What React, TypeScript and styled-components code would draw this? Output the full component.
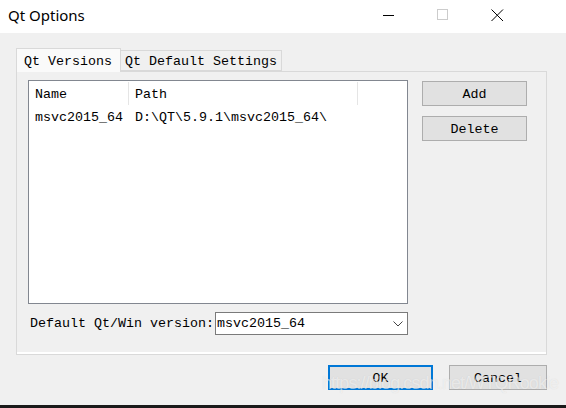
import React from "react";
import styled, { createGlobalStyle } from "styled-components";

const Global = createGlobalStyle`
  html, body { margin: 0; padding: 0; background: #f0f0f0; }
  body { width: 566px; height: 408px; overflow: hidden; }
`;

const Window = styled.div`
  position: relative;
  width: 566px;
  height: 408px;
  display: flex;
  flex-direction: column;
  font-family: "Liberation Mono", "DejaVu Sans Mono", monospace;
  font-size: 13.33px;
  color: #000;
`;

const TitleBar = styled.div`
  height: 33px;
  flex: none;
  background: #fff;
  display: flex;
  align-items: center;
  padding-left: 8px;
  padding-right: 42px;
`;

const Title = styled.div`
  flex: 1;
  font-family: "Noto Sans", "Open Sans", sans-serif;
  font-size: 15px;
  color: #000;
  margin-top: -3px;
`;

const Caption = styled.div`
  width: 54px;
  height: 33px;
  display: flex;
  align-items: center;
  justify-content: center;
  margin-top: -3px;
`;

const Body = styled.div`
  flex: 1;
  background: #f0f0f0;
  display: flex;
  flex-direction: column;
  padding: 15px 19px 0 16px;
`;

const TabBar = styled.div`
  display: flex;
  align-items: flex-end;
  height: 23px;
  position: relative;
  z-index: 1;
`;

const Tab = styled.div<{ $active?: boolean }>`
  box-sizing: border-box;
  height: ${(p) => (p.$active ? 24 : 21)}px;
  margin-bottom: ${(p) => (p.$active ? -1 : 0)}px;
  padding: ${(p) => (p.$active ? "1px 8px 0 7px" : "2px 4px 0 4px")};
  border: 1px solid #d9d9d9;
  border-bottom: ${(p) => (p.$active ? "none" : "1px solid #d9d9d9")};
  border-left: ${(p) => (p.$active ? "1px solid #d9d9d9" : "none")};
  background: ${(p) => (p.$active ? "#fafafa" : "#f0f0f0")};
  display: flex;
  align-items: center;
  white-space: nowrap;
`;

const Pane = styled.div`
  box-sizing: border-box;
  width: 531px;
  height: 284px;
  border: 1px solid #d9d9d9;
  background: #f0f0f0;
  display: grid;
  grid-template-columns: 380px 105px;
  grid-template-rows: 224px 23px;
  column-gap: 14px;
  row-gap: 8px;
  padding: 8px 0 0 11px;
  box-shadow: inset 0 -2px 0 #fff;
`;

const List = styled.div`
  box-sizing: border-box;
  border: 1px solid #828790;
  background: #fff;
  display: flex;
  flex-direction: column;
`;

const Row = styled.div`
  display: grid;
  grid-template-columns: 100px 229px;
  height: 24px;
`;

const Cell = styled.div<{ $header?: boolean }>`
  display: flex;
  align-items: center;
  padding-left: 6px;
  padding-top: ${(p) => (p.$header ? 2 : 1)}px;
  border-right: ${(p) => (p.$header ? "1px solid #e5e5e5" : "none")};
  margin: ${(p) => (p.$header ? "1px 0 0 0" : "0")};
  white-space: nowrap;
`;

const Buttons = styled.div`
  display: flex;
  flex-direction: column;
  gap: 10px;
  padding-top: 1px;
`;

const Button = styled.button<{ $w?: number; $default?: boolean }>`
  box-sizing: border-box;
  width: ${(p) => p.$w ?? 105}px;
  height: 25px;
  margin: 0;
  padding: 2px 0 0 0;
  background: #e1e1e1;
  border: ${(p) => (p.$default ? "2px solid #0078d7" : "1px solid #adadad")};
  font-family: inherit;
  font-size: 13.33px;
  color: #000;
  display: flex;
  align-items: center;
  justify-content: center;
`;

const ComboRow = styled.div`
  display: flex;
  align-items: center;
  padding-left: 2px;
`;

const Label = styled.div`
  width: 185px;
  white-space: nowrap;
`;

const Combo = styled.div`
  box-sizing: border-box;
  width: 193px;
  height: 23px;
  border: 1px solid #7a7a7a;
  background: #fff;
  display: flex;
  align-items: center;
  justify-content: space-between;
  padding: 0 4px 0 1px;
`;

const Footer = styled.div`
  display: flex;
  justify-content: flex-end;
  gap: 16px;
  padding-top: 10px;
`;

const Strip = styled.div`
  height: 3px;
  flex: none;
  background: #1a1a1a;
`;

const Watermark = styled.div`
  position: absolute;
  left: 322px;
  top: 373px;
  font-family: "Liberation Sans", Arial, sans-serif;
  font-size: 18px;
  letter-spacing: -0.9px;
  color: rgba(255, 255, 255, 0.55);
  text-shadow: 0 0 1px rgba(120, 120, 120, 0.2);
  white-space: nowrap;
  pointer-events: none;
`;

export default function App() {
  return (
    <>
      <Global />
      <Window>
        <TitleBar>
          <Title>Qt Options</Title>
          <Caption>
            <svg width="12" height="12" viewBox="0 0 12 12">
              <line x1="0" y1="6.5" x2="11" y2="6.5" stroke="#000" strokeWidth="1" />
            </svg>
          </Caption>
          <Caption>
            <svg width="12" height="12" viewBox="0 0 12 12">
              <rect x="0.5" y="0.5" width="10" height="10" fill="none" stroke="#ccc" strokeWidth="1" />
            </svg>
          </Caption>
          <Caption>
            <svg width="13" height="13" viewBox="0 0 13 13">
              <path d="M0.5 0.5 L12 12 M12 0.5 L0.5 12" stroke="#000" strokeWidth="1" fill="none" />
            </svg>
          </Caption>
        </TitleBar>
        <Body>
          <TabBar>
            <Tab $active>Qt Versions</Tab>
            <Tab>Qt Default Settings</Tab>
          </TabBar>
          <Pane>
            <List>
              <Row>
                <Cell $header>Name</Cell>
                <Cell $header>Path</Cell>
              </Row>
              <Row>
                <Cell>msvc2015_64</Cell>
                <Cell>D:\QT\5.9.1\msvc2015_64\</Cell>
              </Row>
            </List>
            <Buttons>
              <Button>Add</Button>
              <Button>Delete</Button>
            </Buttons>
            <ComboRow>
              <Label>Default Qt/Win version:</Label>
              <Combo>
                <span>msvc2015_64</span>
                <svg width="10" height="6" viewBox="0 0 10 6">
                  <path d="M0.5 0.5 L5 5 L9.5 0.5" stroke="#444" strokeWidth="1" fill="none" />
                </svg>
              </Combo>
            </ComboRow>
          </Pane>
          <Footer>
            <Button $w={105} $default>OK</Button>
            <Button $w={98}>Cancel</Button>
          </Footer>
        </Body>
        <Strip />
        <Watermark>https://blog.csdn.net/WTQRookie</Watermark>
      </Window>
    </>
  );
}
